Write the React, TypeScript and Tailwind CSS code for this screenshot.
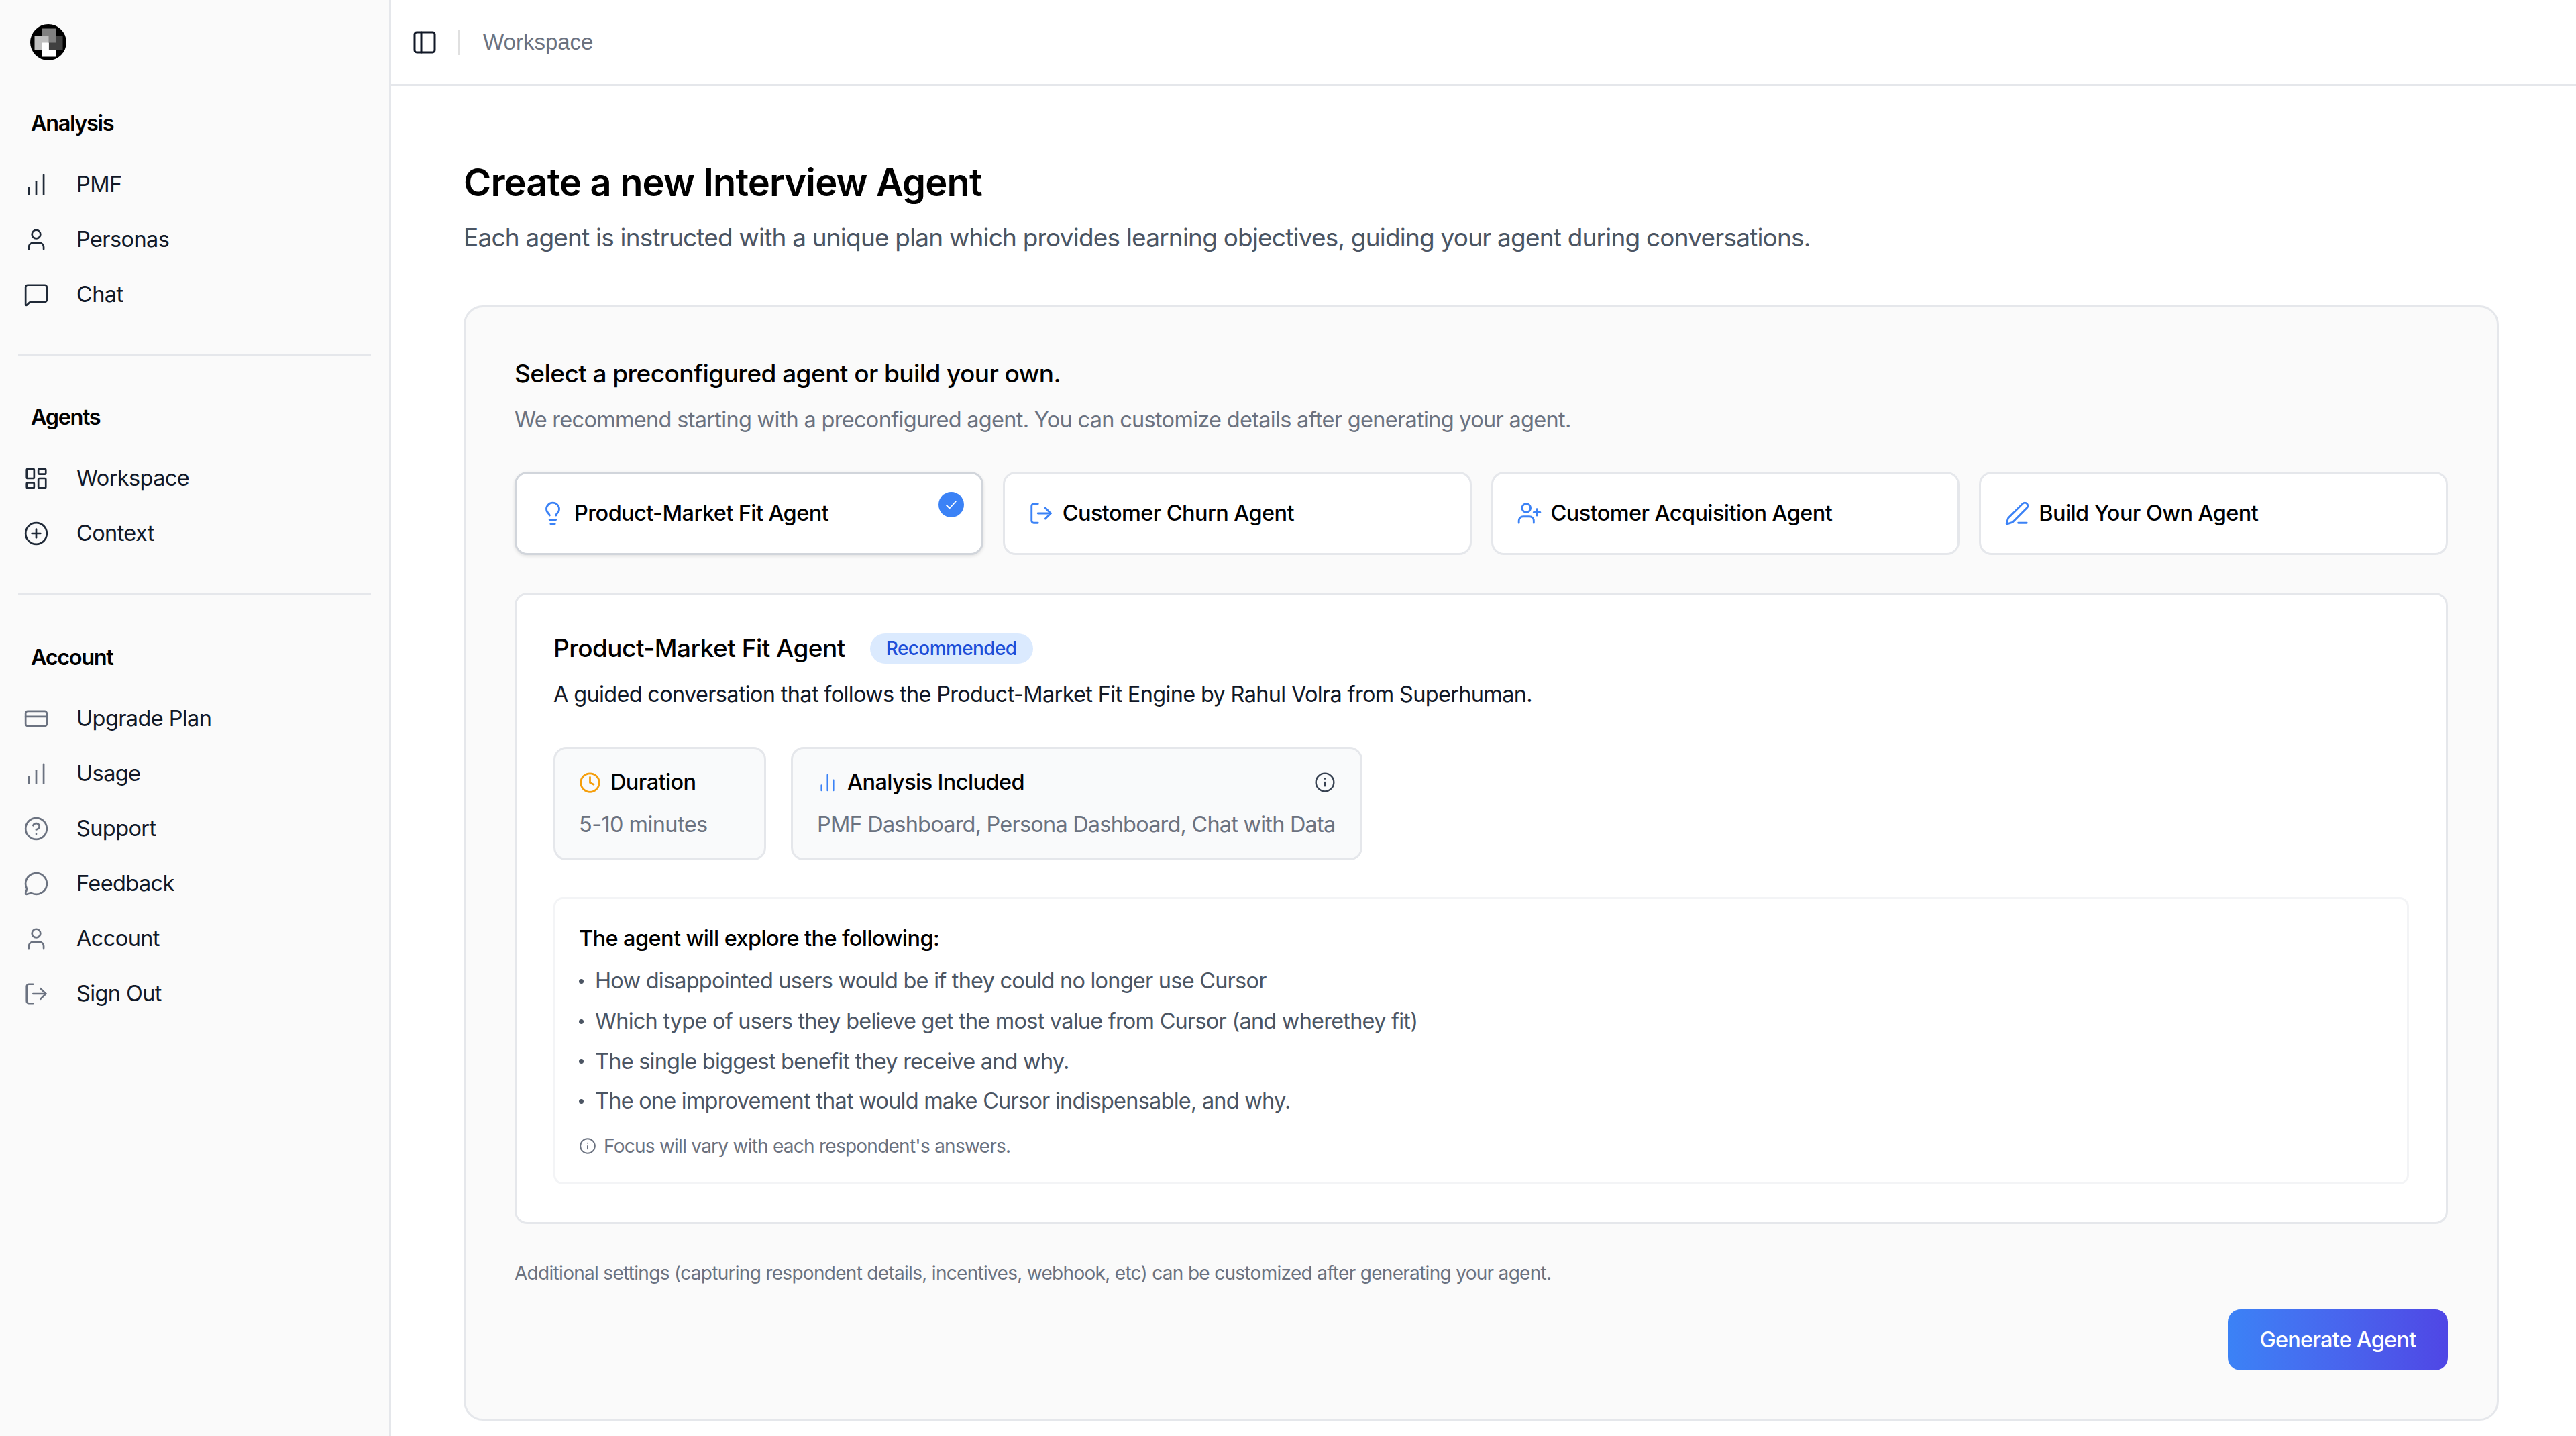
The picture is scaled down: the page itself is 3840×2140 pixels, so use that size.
import React from 'react';
import {
  ChartNoAxesColumn,
  ChartNoAxesColumnIncreasing,
  CircleHelp,
  CirclePlus,
  Clock,
  CreditCard,
  Info,
  LayoutDashboard,
  Lightbulb,
  LogOut,
  MessageCircle,
  MessageSquare,
  PanelLeft,
  PenLine,
  User,
  UserPlus,
} from 'lucide-react';

const analysisItems = [
  { label: 'PMF', icon: ChartNoAxesColumnIncreasing },
  { label: 'Personas', icon: User },
  { label: 'Chat', icon: MessageSquare },
];

const agentItems = [
  { label: 'Workspace', icon: LayoutDashboard },
  { label: 'Context', icon: CirclePlus },
];

const accountItems = [
  { label: 'Upgrade Plan', icon: CreditCard },
  { label: 'Usage', icon: ChartNoAxesColumnIncreasing },
  { label: 'Support', icon: CircleHelp },
  { label: 'Feedback', icon: MessageCircle },
  { label: 'Account', icon: User },
  { label: 'Sign Out', icon: LogOut },
];

const agentOptions = [
  { label: 'Product-Market Fit Agent', icon: Lightbulb, selected: true },
  { label: 'Customer Churn Agent', icon: LogOut, selected: false },
  { label: 'Customer Acquisition Agent', icon: UserPlus, selected: false },
  { label: 'Build Your Own Agent', icon: PenLine, selected: false },
];

const explorePoints = [
  'How disappointed users would be if they could no longer use Cursor',
  'Which type of users they believe get the most value from Cursor (and wherethey fit)',
  'The single biggest benefit they receive and why.',
  'The one improvement that would make Cursor indispensable, and why.',
];

const Logo = () => (
  <svg width="54" height="54" viewBox="0 0 54 54">
    <circle cx="27" cy="27" r="27" fill="#000" />
    <rect x="17" y="27.5" width="21" height="21" fill="#fff" />
    <rect x="28" y="17.5" width="20.5" height="21" fill="#404040" />
    <rect x="17" y="6.5" width="21" height="21" fill="#808080" />
    <rect x="6.5" y="17" width="21" height="21" fill="#bfbfbf" />
    <rect x="17" y="27.5" width="10.5" height="10.5" fill="#fff" />
  </svg>
);

const NavSection: React.FC<{
  title: string;
  items: { label: string; icon: React.ElementType }[];
  muted?: boolean;
}> = ({ title, items, muted }) => (
  <div>
    <div className="ml-[46px] h-[48px] text-[32.5px] leading-[48px] font-semibold tracking-[-1.4px] text-black">{title}</div>
    <div className="mt-[26px]">
      {items.map(item => {
        const Icon = item.icon;
        return (
          <div key={item.label} className="flex h-[82px] items-center pl-[35px] text-[32.5px] text-[#111827]">
            <Icon size={38} strokeWidth={1.7} className={muted ? 'text-[#6b7280]' : 'text-[#1f2937]'} />
            <span className="ml-[41px]">{item.label}</span>
          </div>
        );
      })}
    </div>
  </div>
);

export default function App() {
  return (
    <div className="flex h-screen overflow-hidden bg-white font-['Inter',sans-serif] tracking-[-0.6px] text-black">
      <aside className="w-[583px] shrink-0 border-r-[3px] border-[#e5e7eb] bg-[#fafafa]">
        <div className="ml-[45px] pt-[36px]">
          <Logo />
        </div>
        <div className="mt-[70px]">
          <NavSection title="Analysis" items={analysisItems} />
        </div>
        <div className="mx-[27px] mt-[48px] mb-[67px] h-[3px] bg-[#e5e7eb]" />
        <NavSection title="Agents" items={agentItems} />
        <div className="mx-[27px] mt-[48px] mb-[69px] h-[3px] bg-[#e5e7eb]" />
        <NavSection title="Account" items={accountItems} muted />
      </aside>

      <div className="min-w-0 flex-1">
        <header className="flex h-[128px] items-center border-b-[3px] border-[#e5e7eb] pl-[30px]">
          <PanelLeft size={40} strokeWidth={1.8} className="text-[#111827]" />
          <div className="ml-[30px] h-[38px] w-[3px] bg-[#e0e0e0]" />
          <span className="ml-[34px] font-['Liberation_Sans',sans-serif] text-[33px] tracking-normal text-[#6b7280]">Workspace</span>
        </header>

        <main className="pt-[110px] pr-[115px] pl-[108px]">
          <h1 className="h-[68px] text-[56px] leading-[68px] font-semibold tracking-[-0.85px]">Create a new Interview Agent</h1>
          <p className="mt-[20px] h-[56px] text-[37px] leading-[56px] tracking-[-0.8px] text-[#4b5563]">
            Each agent is instructed with a unique plan which provides learning objectives, guiding your agent during conversations.
          </p>

          <section className="mt-[73px] rounded-[29px] border-[3px] border-[#e5e7eb] bg-[#fafafa] px-[73px] pt-[72px] pb-[72px]">
            <h2 className="h-[54px] text-[37px] leading-[54px] font-medium tracking-[-0.57px]">Select a preconfigured agent or build your own.</h2>
            <p className="mt-[18px] h-[48px] text-[32.5px] leading-[48px] tracking-[-0.7px] text-[#6b7280]">
              We recommend starting with a preconfigured agent. You can customize details after generating your agent.
            </p>

            <div className="mt-[53px] grid grid-cols-4 gap-[29px]">
              {agentOptions.map(option => {
                const Icon = option.icon;
                return (
                  <div
                    key={option.label}
                    className={`relative flex h-[124px] items-center rounded-[19px] border-[3px] bg-white pl-[35px] ${
                      option.selected ? 'border-[#d1d5db] shadow-[0_2px_5px_rgba(0,0,0,0.1)]' : 'border-[#e5e7eb]'
                    }`}
                  >
                    <Icon size={38} strokeWidth={1.8} className="shrink-0 text-[#3b82f6]" />
                    <span className="ml-[13px] text-[32.5px] font-medium">{option.label}</span>
                    {option.selected && (
                      <span className="absolute top-[27px] right-[26px] flex h-[38px] w-[38px] items-center justify-center rounded-full bg-[#3b82f6]">
                        <svg width="24" height="24" viewBox="0 0 24 24" fill="none" stroke="#fff" strokeWidth="1.8" strokeLinecap="round" strokeLinejoin="round">
                          <path d="M5 13l4.5 4.5L19 7" />
                        </svg>
                      </span>
                    )}
                  </div>
                );
              })}
            </div>

            <div className="mt-[56px] rounded-[19px] border-[3px] border-[#e5e7eb] bg-white px-[55px] pt-[53px] pb-[56px]">
              <div className="flex h-[54px] items-center">
                <h3 className="text-[37px] font-medium tracking-[-0.55px]">Product-Market Fit Agent</h3>
                <span className="ml-[37px] flex h-[45px] items-center rounded-full bg-[#dbeafe] px-[24px] text-[28px] font-medium text-[#1d4ed8]">
                  Recommended
                </span>
              </div>
              <p className="mt-[19px] h-[46px] text-[32.5px] leading-[46px] tracking-[-0.68px] text-[#111827]">
                A guided conversation that follows the Product-Market Fit Engine by Rahul Volra from Superhuman.
              </p>

              <div className="mt-[55px] flex gap-[37px]">
                <div className="h-[169px] w-[317px] rounded-[19px] border-[3px] border-[#e5e7eb] bg-[#f9fafb] px-[35px] pt-[28px]">
                  <div className="flex h-[44px] items-center text-[32.5px] font-medium">
                    <Clock size={33} strokeWidth={2} className="shrink-0 text-[#f59e0b]" />
                    <span className="ml-[14px]">Duration</span>
                  </div>
                  <div className="mt-[19px] h-[44px] text-[32.5px] leading-[44px] text-[#6b7280]">5-10 minutes</div>
                </div>
                <div className="h-[169px] w-[852px] rounded-[19px] border-[3px] border-[#e5e7eb] bg-[#f9fafb] px-[36px] pt-[28px]">
                  <div className="flex h-[44px] items-center text-[32.5px] font-medium">
                    <ChartNoAxesColumn size={31} strokeWidth={1.6} className="shrink-0 text-[#3b82f6]" />
                    <span className="ml-[14px]">Analysis Included</span>
                    <Info size={32} strokeWidth={1.8} className="mr-[1px] ml-auto shrink-0 text-[#374151]" />
                  </div>
                  <div className="mt-[19px] h-[44px] text-[32.5px] leading-[44px] tracking-[-0.8px] whitespace-nowrap text-[#6b7280]">
                    PMF Dashboard, Persona Dashboard, Chat with Data
                  </div>
                </div>
              </div>

              <div className="mt-[55px] rounded-[14px] border-[3px] border-[#f3f4f6] px-[35px] pt-[37px] pb-[36px]">
                <h4 className="h-[44px] text-[32.5px] leading-[44px] font-medium">The agent will explore the following:</h4>
                <ul className="mt-[12px]">
                  {explorePoints.map(point => (
                    <li key={point} className="flex h-[59.6px] items-center text-[32.5px] tracking-[-0.78px] text-[#4b5563]">
                      <span className="h-[7px] w-[7px] shrink-0 rounded-full bg-[#4b5563]" />
                      <span className="ml-[17px]">{point}</span>
                    </li>
                  ))}
                </ul>
                <div className="mt-[19px] flex h-[36px] items-center text-[28px] tracking-[-0.75px] text-[#6b7280]">
                  <Info size={26} strokeWidth={1.8} className="shrink-0" />
                  <span className="ml-[11px]">Focus will vary with each respondent's answers.</span>
                </div>
              </div>
            </div>

            <p className="mt-[53px] h-[40px] text-[28px] leading-[40px] tracking-[-0.7px] text-[#6b7280]">
              Additional settings (capturing respondent details, incentives, webhook, etc) can be customized after generating your agent.
            </p>

            <div className="mt-[34px] flex justify-end">
              <button className="h-[91px] w-[328px] rounded-[19px] bg-gradient-to-r from-[#3b82f6] to-[#4f46e5] text-[32.5px] font-medium tracking-[-0.8px] text-white">
                Generate Agent
              </button>
            </div>
          </section>
        </main>
      </div>
    </div>
  );
}
